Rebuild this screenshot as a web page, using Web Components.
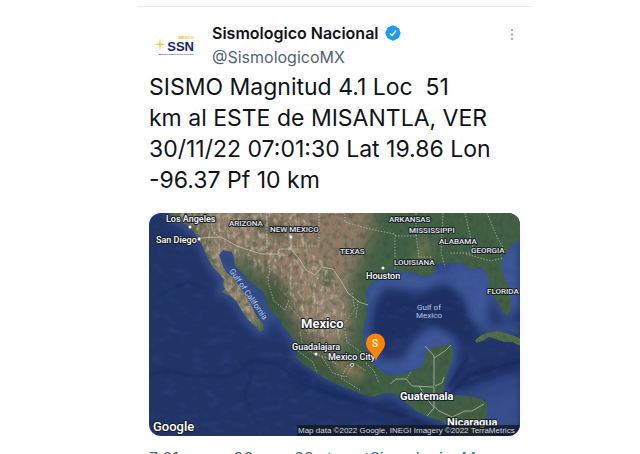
<!DOCTYPE html>
<html lang="es">
<head>
<meta charset="utf-8">
<meta name="viewport" content="width=device-width, initial-scale=1">
<title>Sismologico Nacional</title>
<style>
  html { overflow: hidden; background: #fff; }
  body { margin: 0; font-family: Inter, "Liberation Sans", sans-serif; color: #0f1419; }
</style>
</head>
<body>
<tweet-page>
  <tweet-card>
    <tweet-author name="Sismologico Nacional" handle="@SismologicoMX"></tweet-author>
    <tweet-text>SISMO Magnitud 4.1 Loc&nbsp; 51
km al ESTE de MISANTLA, VER
30/11/22 07:01:30 Lat 19.86 Lon
-96.37 Pf 10 km</tweet-text>
    <quake-map></quake-map>
    <tweet-meta>7:01 a. m. · 30 nov. 22 · <a href="#source">tweetSismologicoMx</a></tweet-meta>
  </tweet-card>
</tweet-page>

<script>
class BaseElement extends HTMLElement {
  connectedCallback() {
    if (!this.shadowRoot) this.attachShadow({ mode: "open" }).innerHTML = this.render();
  }
}

customElements.define("tweet-page", class extends BaseElement {
  render() {
    return `<style>
      :host { display: grid; grid-template-columns: 137fr 395fr 108fr; padding-top: 6px; }
      main { grid-column: 2; min-width: 0; }
    </style><main><slot></slot></main>`;
  }
});

customElements.define("tweet-card", class extends BaseElement {
  render() {
    return `<style>
      :host { display: block; }
      article { display: flex; flex-direction: column; border-top: 1px solid #e9ebec; padding: 14px 12px 0; }
    </style><article><slot></slot></article>`;
  }
});

customElements.define("ssn-logo", class extends BaseElement {
  render() {
    return `<style>
      :host { display: block; width: 48px; flex: none; }
      svg { display: block; width: 100%; font-family: "Liberation Sans", sans-serif; font-weight: 700; }
    </style>
    <svg viewBox="0 0 48 48" role="img" aria-label="SSN México">
      <path d="M11 16.500l.8 6 5 .9-5 .9-.8 6-.8-6-5.200-.9 5.200-.9z" fill="#f3c64c"/>
      <path d="M7.500 20l3 2.800M7.500 27l3-2.800M14.500 20l-3 2.800M14.500 27l-3-2.800" stroke="#f6d988" stroke-width=".6"/>
      <text x="45" y="18" font-size="4" text-anchor="end" fill="#eec02e">MÉXICO</text>
      <text x="45" y="30" font-size="13" text-anchor="end" fill="#10286b">SSN</text>
      <text x="45" y="34" font-size="2" text-anchor="end" fill="#10286b">SERVICIO SISMOLÓGICO NACIONAL</text>
    </svg>`;
  }
});

customElements.define("tweet-author", class extends BaseElement {
  render() {
    return `<style>
      :host { display: flex; align-items: flex-start; }
      .who { flex: 1; min-width: 0; margin-left: 15px; }
      .name { display: flex; align-items: center; gap: 6px; font-size: 16px; line-height: 24px; font-weight: 600; }
      .badge { width: 16px; height: 16px; flex: none; }
      .handle { font-size: 16px; line-height: 24px; color: #536471; }
      button { border: 0; background: none; padding: 0; width: 16px; height: 24px; cursor: pointer; }
      button svg { display: block; width: 16px; height: 24px; }
    </style>
    <ssn-logo></ssn-logo>
    <div class="who">
      <div class="name"><span>${this.getAttribute("name")}</span>
        <svg class="badge" viewBox="1 1 20 20" role="img" aria-label="Cuenta verificada"><path fill="#1d9bf0" d="M20.400 11c0-1.100-.6-2.100-1.500-2.700.4-1 .3-2.200-.6-3-.8-.9-2-1.100-3-.7C14.700 3.600 13.700 3 12.600 3h-.2C12 1.900 11.500 1.500 11 1.500c-1.600 0-2.900.8-3.500 2.200-1.300-.3-2.500 0-3.300.9-.8.8-1 2-.7 3.200C2.300 8.500 1.500 9.700 1.500 11s.8 2.500 2 3.100c-.3 1.300 0 2.500.8 3.300.9.8 2 1.100 3.200.8.6 1.400 1.900 2.300 3.500 2.300s2.900-.9 3.500-2.300c1.200.3 2.400 0 3.200-.8.8-.9 1.100-2 .8-3.300 1.200-.6 1.900-1.800 1.900-3.100z"/><circle cx="11" cy="11" r="9" fill="#1d9bf0"/><path d="M7 11.300l2.700 2.700 5-5.800" fill="none" stroke="#fff" stroke-width="1.700"/></svg>
      </div>
      <div class="handle">${this.getAttribute("handle")}</div>
    </div>
    <button type="button" aria-label="Más opciones"><svg viewBox="0 0 16 24"><g fill="#a4b0b6"><circle cx="8" cy="9" r="1.200"/><circle cx="8" cy="13.500" r="1.200"/><circle cx="8" cy="18" r="1.200"/></g></svg></button>`;
  }
});

customElements.define("tweet-text", class extends BaseElement {
  render() {
    return `<style>
      :host { display: block; margin-top: 3px; }
      p { margin: 0; font-size: 23px; line-height: 31px; white-space: pre-line; }
    </style><p><slot></slot></p>`;
  }
});

customElements.define("tweet-meta", class extends BaseElement {
  render() {
    return `<style>
      :host { display: block; margin-top: 10px; font-size: 16px; line-height: 24px; color: #536471; white-space: nowrap; }
      ::slotted(a) { color: #1d84c0; text-decoration: none; }
    </style><slot></slot>`;
  }
});

const MAINLAND = "M20 0L29 9L36 11L42 15L49 25L53 32L56 39L60 48L64 55L71 61L75 67L74 72L76 76L72 79L82 83L88 89L92 96L98 106L106 113L111 119L115 117L114 111L107 102L103 93L96 81L90 73L84 64L78 60L74 54L72 48L70 42L74 37L79 38L83 39L85 45L86 52L92 59L98 66L105 72L113 78L117 84L118 92L124 100L131 107L135 115L140 120L146 130L149 136L147 144L154 151L165 158L175 165L184 169L194 174L203 177L215 182L226 184L235 180L243 180L254 187L261 193L268 199L281 205L290 207L298 212L304 217L308 223L336 223L336 212L338 202L338 190L332 186L322 183L308 182L300 185L294 184L295 176L297 168L299 159L303 149L305 137L303 132L296 132L284 134L277 139L275 148L272 154L262 159L252 161L241 163L233 158L226 153L221 144L216 136L214 124L215 112L218 104L219 92L217 82L219 75L223 70L230 66L236 61L246 57L254 60L262 59L271 63L279 64L283 62L287 58L286 52L294 50L304 50L314 50L319 55L325 57L331 54L336 58L340 64L340 73L345 84L349 90L354 99L359 103L362 96L362 85L359 72L355 63L353 54L354 45L360 37L364 31L371 26V0Z";
const CUBA = "M326 127L332 122L340 119L348 118L358 120L371 125V133L363 129L355 129L346 126L340 124L334 128L327 130Z";

customElements.define("quake-map", class extends BaseElement {
  render() {
    return `<style>
      :host { display: block; margin-top: 17px; border-radius: 12px; overflow: hidden; }
      svg { display: block; width: 100%; font-family: Roboto, "Liberation Sans", sans-serif; }
      .halo { paint-order: stroke; stroke: #17202a; stroke-width: 2px; stroke-linejoin: round; fill: #fff; }
      .state { font-size: 8px; font-weight: 500; fill: #e8e8e4; }
      .city { font-size: 9px; font-weight: 500; }
      .country { font-weight: 700; }
      .sea { font-size: 8px; fill: #b4cbea; }
    </style>
    <svg viewBox="0 0 371 223" role="img" aria-label="Mapa del epicentro">
      <defs>
        <path id="land" d="${MAINLAND}"/><path id="cuba" d="${CUBA}"/>
        <clipPath id="lc"><use href="#land"/><use href="#cuba"/></clipPath>
        <filter id="b4" x="-30%" y="-30%" width="160%" height="160%"><feGaussianBlur stdDeviation="4"/></filter>
        <filter id="b8" x="-50%" y="-50%" width="200%" height="200%"><feGaussianBlur stdDeviation="9"/></filter>
        <filter id="b1"><feGaussianBlur stdDeviation="1"/></filter>
        <filter id="rough" x="0" y="0" width="100%" height="100%">
          <feTurbulence type="fractalNoise" baseFrequency=".2 .15" numOctaves="5" seed="8"/>
          <feColorMatrix values="0 0 0 0 .04  0 0 0 0 .07  0 0 0 0 .05  2.400 0 0 0 -1.100"/>
        </filter>
        <filter id="light" x="0" y="0" width="100%" height="100%">
          <feTurbulence type="fractalNoise" baseFrequency=".25 .15" numOctaves="5" seed="23"/>
          <feColorMatrix values="0 0 0 0 .83  0 0 0 0 .75  0 0 0 0 .64  2.400 0 0 0 -1.150"/>
        </filter>
        <filter id="seabed" x="0" y="0" width="100%" height="100%">
          <feTurbulence type="fractalNoise" baseFrequency=".07 .13" numOctaves="5" seed="4"/>
          <feColorMatrix values="0 0 0 0 .03  0 0 0 0 .07  0 0 0 0 .25  2.200 0 0 0 -1.050"/>
        </filter>
      </defs>
      <rect width="371" height="223" fill="#213467"/>
      <g filter="url(#b4)">
        <use href="#land" fill="none" stroke="#3b5594" stroke-width="7"/>
        <path d="M216 70L246 57L288 62L314 50L340 60L361 102L371 95V20L340 40V120L322 116L312 85L288 72L270 80L235 74L226 90L220 120L232 148L254 146L266 125L284 112L306 122L306 150L274 160L226 158L212 130Z" fill="#3d5798"/>
        <path d="M326 112L371 110V123L330 120ZM340 178L371 168V216L340 218Z" fill="#374f8e"/>
        <path d="M72 45L116 90L128 108L114 114L96 80Z" fill="#344e85"/>
        <path d="M305 180L318 172L371 157V175L336 190Z" fill="#304885"/>
      </g>
      <g filter="url(#b4)" fill="#1c2e62">
        <path d="M229 91L250 81L280 85L296 70L312 84L320 108L331 114L320 127L304 119L284 108L267 113L252 128L238 132L226 116Z"/>
        <path d="M302 174L318 162L340 153L371 145V156L345 163L318 176Z"/>
        <path d="M140 146L170 167L226 190L262 200L298 220L284 223L240 201L180 184L148 166Z"/>
      </g>
      <rect width="371" height="223" filter="url(#seabed)" opacity=".4"/>
      <g fill="none" stroke="#162652" stroke-width="1" filter="url(#b1)" opacity=".7">
        <path d="M0 161L20 158L42 163L77 163L93 157L101 147L127 150L150 169L190 184L225 193L259 204L290 222"/>
        <path d="M103 151L101 168L95 183L102 199L110 211M10 82L24 75L39 69L55 74"/>
        <path d="M299 184L318 163L345 155L371 148M318 145L300 174" stroke-width="2"/>
      </g>
      <g clip-path="url(#lc)">
        <use href="#land" fill="#426044"/><use href="#cuba" fill="#526f45"/>
        <g filter="url(#b8)">
          <path d="M20 -20H222L223 22L208 54L197 75L203 104L195 130L180 143L153 121L143 92L126 73L98 37L74 50L58 35Z" fill="#8a7863"/>
          <path d="M64 0H140V25H89ZM150 48L196 65L190 125L164 112Z" fill="#978570"/>
          <path d="M115 60L140 76L151 115L181 144L220 150V184L145 155L127 110Z" fill="#3e5940"/>
        </g>
        <g filter="url(#b4)">
          <path d="M20 0H60L52 23L37 14Z" fill="#525e3e"/><path d="M111 55L132 67L139 96L122 85Z" fill="#344c31"/>
          <path d="M174 54L185 57L184 76L176 77Z" fill="#475d3c"/><path d="M58 24L76 31L79 60L108 96L112 118L95 103L72 70Z" fill="#96826a"/>
          <path d="M97 4L137 11L147 20L129 26L101 13Z" fill="#4e4d38"/><path d="M272 21L286 30L276 54L263 47Z" fill="#63714e"/>
          <path d="M180 140L198 149L218 158L209 169L187 157Z" fill="#817856"/>
        </g>
        <g filter="url(#b4)"><path d="M30 0H220L200 55L200 130L155 120L120 77L90 50L113 118L90 100L55 35Z" fill="#9a856b" opacity=".25"/></g>
        <clipPath id="dry"><path d="M25 0H160L165 40L190 65L197 101L190 128L160 120L144 90L124 70L84 40L86 63L114 118L90 100L50 30Z"/></clipPath>
        <g clip-path="url(#dry)"><rect width="371" height="223" filter="url(#light)" opacity=".55"/></g>
        <rect width="371" height="223" filter="url(#rough)" opacity=".5"/>
      </g>
      <g fill="none" stroke="#d4d8c8" stroke-width=".8" opacity=".75">
        <path d="M50 25L72 24L88 33L112 41H130V36H142L151 47L157 57L166 62L173 54L184 56L191 66L199 80L210 89L219 92"/>
        <path d="M241 171L247 166H257L263 173L285 174M285 173V143L276 133M285 145L296 138L302 132M286 173L293 170L295 164M285 174V195L278 203M270 173L281 190L290 198L303 204L316 198L323 198L335 191"/>
        <g stroke-dasharray="1.500 1.500">
          <path d="M60 -1L64 18L71 25M118 0V41M170 0V33H142M170 0H196V9L213 14L230 18L246 21V57M246 23H267V0M267 22L270 44H282V54M294 0L292 39L296 54M316 0L325 40H300M317 41L342 48L354 45M338 0L348 24L356 38"/>
          <path d="M121 52L119 70L125 88L136 97L140 87M140 93L151 105L159 121M151 119L154 134L164 140L178 145L189 152M203 80L206 96L195 111L198 129L213 140M209 88L207 105M149 138L164 149L168 160M173 144L184 160L197 164L205 150L217 158M199 152L192 165L211 177M217 150L225 158L230 170M262 159L257 166"/>
        </g>
      </g>
      <g fill="#fff"><circle cx="41" cy="14" r="1.500"/><circle cx="50" cy="26" r="1.500"/><circle cx="234" cy="55" r="1.500"/><circle cx="142" cy="24" r="1.500"/><circle cx="167" cy="141" r="1.500"/><circle cx="203" cy="152" r="1.500" fill="#333" stroke="#ddd"/></g>
      <text class="sea" transform="translate(80 58) rotate(55)">Gulf of California</text>
      <text class="sea" text-anchor="middle"><tspan x="280" y="97">Gulf of</tspan><tspan x="280" y="105">Mexico</tspan></text>
      <g class="halo state">
        <text x="80" y="13">ARIZONA</text><text x="121" y="19">NEW MEXICO</text><text x="191" y="41">TEXAS</text>
        <text x="240" y="9">ARKANSAS</text><text x="260" y="20">MISSISSIPPI</text><text x="290" y="31">ALABAMA</text>
        <text x="322" y="40">GEORGIA</text><text x="245" y="52">LOUISIANA</text><text x="338" y="81">FLORIDA</text>
      </g>
      <g class="halo city">
        <text x="17" y="9">Los Angeles</text><text x="7" y="30">San Diego</text><text x="217" y="66">Houston</text>
        <text x="143" y="137">Guadalajara</text><text x="179" y="147">Mexico City</text>
      </g>
      <g class="halo country">
        <text x="152" y="115" font-size="13">Mexico</text><text x="251" y="187" font-size="11">Guatemala</text><text x="298" y="213" font-size="11">Nicaragua</text>
      </g>
      <rect x="148" y="212" width="223" height="11" fill="#10151f" opacity=".72"/>
      <text x="149" y="220" font-size="8" fill="#d5d7da" font-family="Liberation Sans, sans-serif">Map data ©2022 Google, INEGI Imagery ©2022 TerraMetrics</text>
      <text class="halo" x="4" y="218" font-size="13" font-weight="500">Google</text>
      <path d="M227 148C225 140 217 138 217 130A9.500 9.500 0 0 1 236 130C236 138 229 140 227 148Z" fill="#ff8500"/>
      <text x="226" y="134" font-size="10" font-weight="500" fill="#fff" text-anchor="middle">S</text>
    </svg>`;
  }
});
</script>
</body>
</html>
